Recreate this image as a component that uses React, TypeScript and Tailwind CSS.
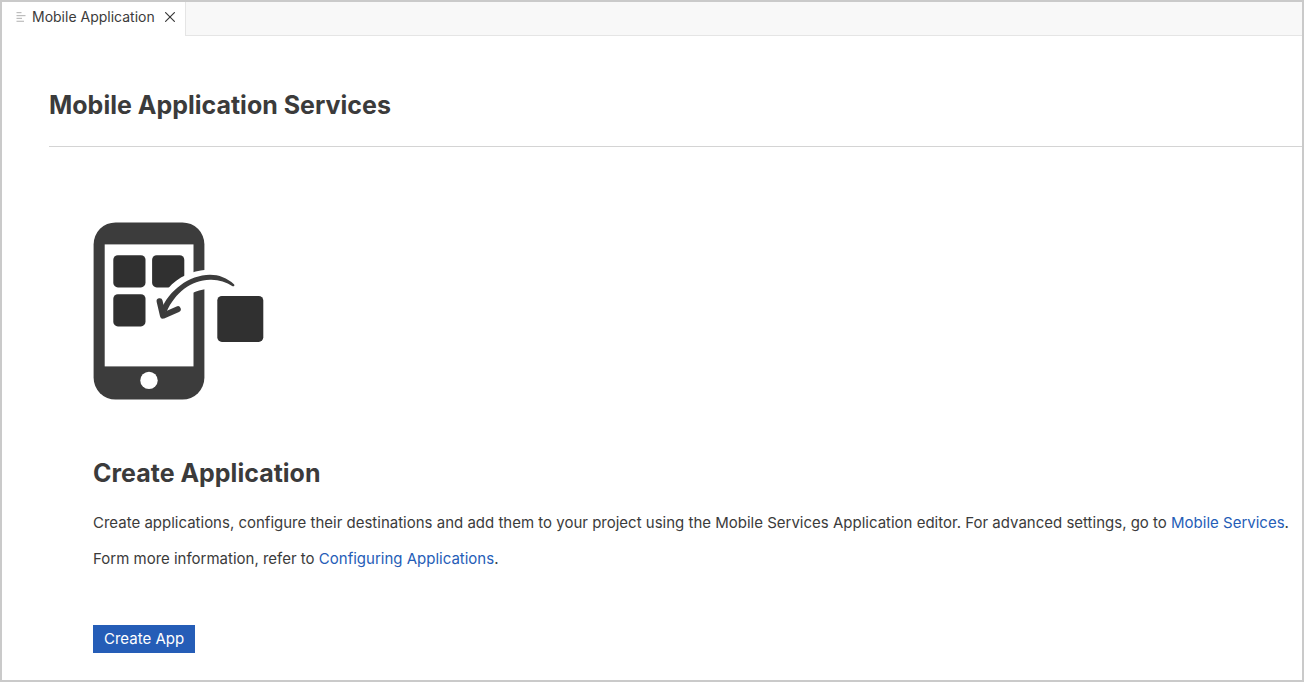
import React from "react";

function FileIcon() {
  return (
    <svg viewBox="0 0 10 10" className="h-[10px] w-[10px] shrink-0" fill="#bdbdbd" aria-hidden="true">
      <rect x="0.5" y="0" width="5" height="1.2" />
      <rect x="0.5" y="3" width="9" height="1.2" />
      <rect x="0.5" y="5.8" width="5.5" height="1.2" />
      <rect x="0.5" y="8.7" width="7.5" height="1.2" />
    </svg>
  );
}

function CloseIcon() {
  return (
    <svg viewBox="0 0 10 10" className="h-[10px] w-[10px]" stroke="#3a3a3a" strokeWidth="1.2" strokeLinecap="round" aria-hidden="true">
      <path d="M0.6 0.6 9.4 9.4M9.4 0.6 0.6 9.4" />
    </svg>
  );
}

function PhoneIllustration() {
  return (
    <svg viewBox="0 0 172 178" className="h-[178px] w-[172px]" aria-hidden="true">
      <rect x="0.6" y="0.4" width="110.8" height="177.2" rx="22" fill="#3c3c3c" />
      <rect x="11.7" y="22.4" width="88.8" height="122" fill="#fff" />
      <circle cx="56" cy="158.4" r="8.7" fill="#fff" />
      <g fill="#303030">
        <rect x="20.3" y="33.2" width="32.2" height="32.2" rx="4.6" />
        <rect x="59.1" y="33.2" width="32.2" height="32.2" rx="4.6" />
        <rect x="20.3" y="72.2" width="32.2" height="32.2" rx="4.6" />
        <rect x="124.3" y="73.9" width="46" height="46" rx="4.6" />
      </g>
      <path d="M75 66.5C80 60.5 86 56 93 53C99 50.3 106 48.5 113 47.8V67C108 67.8 104 69 100 70.8L82 82Z" fill="#fff" />
      <path d="M141.2 62.4C134 56 126 52.8 117 52.8C96 53.2 76 68 67.5 89L73.5 90C82 71 98 58 117 57.8C125.5 57.5 133 60 139.6 64.2C141 64.8 141.8 63.4 141.2 62.4Z" fill="#3c3c3c" />
      <path d="M66.6 79.2 70 93.7 84.8 87.2" fill="none" stroke="#3c3c3c" strokeWidth="6" strokeLinecap="round" strokeLinejoin="round" />
    </svg>
  );
}

export default function App() {
  return (
    <div className="flex min-h-screen flex-col border-2 border-[#cacaca] bg-white font-[Inter,sans-serif] text-[#3b3b3b]">
      <header className="flex h-[34px] bg-[#f8f8f8]">
        <div className="flex items-center border-r border-[#e5e5e5] bg-white pr-2.5 pb-1 pl-3.5">
          <FileIcon />
          <span className="ml-1.5 text-sm leading-5">Mobile Application</span>
          <button type="button" aria-label="Close tab" className="ml-2.5">
            <CloseIcon />
          </button>
        </div>
        <div className="flex-1 border-b border-[#e5e5e5]" />
      </header>
      <main className="pl-[47px]">
        <h1 className="border-b border-[#d4d4d4] pt-[53px] pb-[25px] text-[25px] leading-8 font-bold">
          Mobile Application Services
        </h1>
        <section className="pt-[75px] pb-6 pl-11">
          <PhoneIllustration />
          <h2 className="mt-[57px] text-[25px] leading-8 font-bold">Create Application</h2>
          <p className="mt-[22px] text-[15px] leading-6">
            Create applications, configure their destinations and add them to your project using the Mobile Services
            Application editor. For advanced settings, go to <a href="#mobile-services" className="text-[#255db7]">Mobile Services</a>.
          </p>
          <p className="mt-3 text-[15px] leading-6">
            Form more information, refer to <a href="#configuring-applications" className="text-[#255db7]">Configuring Applications</a>.
          </p>
          <button type="button" className="mt-[54px] h-7 bg-[#255db7] px-[11px] text-[15px] leading-6 text-white">
            Create App
          </button>
        </section>
      </main>
    </div>
  );
}
